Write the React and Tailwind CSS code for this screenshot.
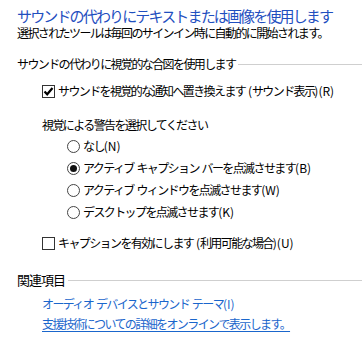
import React from 'react';

const font = { fontFamily: '"Noto Sans CJK JP", "Noto Sans", sans-serif' };

// Japanese glyphs get squeezed to the width of the narrow UI face; latin runs keep normal spacing
const J = ({ text, tight = 'tracking-[-1.6px]' }) =>
  text.split(/([\x20-\x7E]+)/).filter(Boolean).map((part, i) =>
    /^[\x20-\x7E]+$/.test(part) ? (
      <span key={i} className="tracking-normal whitespace-pre">{part}</span>
    ) : (
      <span key={i} className={tight}>{part}</span>
    )
  );

const CheckBox = ({ checked }) => (
  <span className="w-[13px] h-[13px] border border-[#333333] bg-white flex items-center justify-center shrink-0">
    {checked && (
      <svg width="11" height="11" viewBox="0 0 11 11">
        <path d="M1.5 5.5 L4.2 8.3 L9.5 2" fill="none" stroke="#000" strokeWidth="2.2" />
      </svg>
    )}
  </span>
);

const Radio = ({ checked }) => (
  <span className="w-[13px] h-[13px] rounded-full border border-[#444444] bg-white flex items-center justify-center shrink-0">
    {checked && <span className="w-[7px] h-[7px] rounded-full bg-[#111111]" />}
  </span>
);

const SectionHeader = ({ children, className }) => (
  <div className={`flex items-center h-[16px] ${className}`}>
    <span className="text-[12px] text-black whitespace-nowrap">{children}</span>
    <div className="flex-1 h-px bg-[#cfcfcf] ml-[3px]" />
  </div>
);

const App = () => {
  const radios = [
    { label: 'なし(N)', checked: false },
    { label: 'アクティブ キャプション バーを点滅させます(B)', checked: true },
    { label: 'アクティブ ウィンドウを点滅させます(W)', checked: false },
    { label: 'デスクトップを点滅させます(K)', checked: false },
  ];

  return (
    <div className="w-[362px] h-[364px] bg-white pl-[17px] pt-[8px] overflow-hidden" style={font}>
      <h1 className="text-[15px] leading-[16px] tracking-[-1.85px] text-[#1f4fbf] whitespace-nowrap">
        サウンドの代わりにテキストまたは画像を使用します
      </h1>
      <p className="text-[12px] leading-[14px] mt-[2px] text-black whitespace-nowrap">
        <J text="選択されたツールは毎回のサインイン時に自動的に開始されます。" />
      </p>

      <SectionHeader className="mt-[16px]">
        <J text="サウンドの代わりに視覚的な合図を使用します" />
      </SectionHeader>

      <div className="ml-[25px]">
        <label className="flex items-center h-[22px] mt-[8px] gap-[3px]">
          <CheckBox checked />
          <span className="text-[12px] text-black whitespace-nowrap">
            <J text="サウンドを視覚的な通知へ置き換えます (サウンド表示)(R)" />
          </span>
        </label>

        <div className="flex items-center h-[20px] mt-[13px] text-[12px] text-black whitespace-nowrap">
          <J text="視覚による警告を選択してください" />
        </div>

        <div className="ml-[25px]">
          {radios.map((r) => (
            <label key={r.label} className="flex items-center h-[22px] gap-[3px]">
              <Radio checked={r.checked} />
              <span className="text-[12px] text-black whitespace-nowrap">
                <J text={r.label} />
              </span>
            </label>
          ))}
        </div>

        <label className="flex items-center h-[22px] mt-[9px] gap-[3px]">
          <CheckBox />
          <span className="text-[12px] text-black whitespace-nowrap">
            <J text="キャプションを有効にします (利用可能な場合)(U)" />
          </span>
        </label>
      </div>

      <SectionHeader className="mt-[18px]">
        <span className="text-[13px] tracking-[-1px]">関連項目</span>
      </SectionHeader>

      <div className="ml-[25px] mt-[6px]">
        <div className="flex items-center h-[20px]">
          <a className="text-[12px] text-[#1a66cc] whitespace-nowrap">
            <J text="オーディオ デバイスとサウンド テーマ(I)" />
          </a>
        </div>
        <div className="flex items-center h-[20px]">
          <a className="text-[12px] text-[#1a66cc] underline underline-offset-2 whitespace-nowrap">
            <J text="支援技術についての詳細をオンラインで表示します。" />
          </a>
        </div>
      </div>
    </div>
  );
};

export default App;
